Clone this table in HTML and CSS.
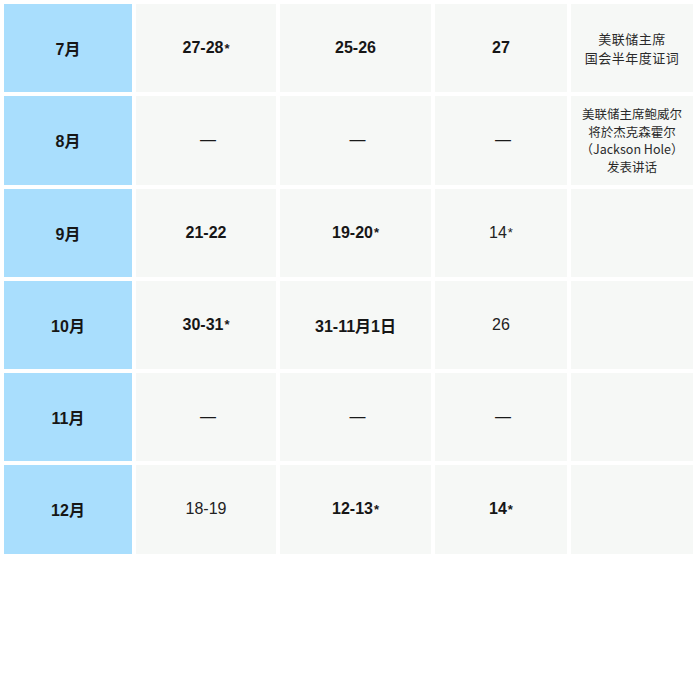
FILE: index.html
```html
<!DOCTYPE html>
<html lang="zh">
<head>
<meta charset="utf-8">
<link rel="stylesheet" href="styles.css">
</head>
<body>
<div class="table">
  <div class="cell month">7月</div>
  <div class="cell bold">27-28<span class="star">*</span></div>
  <div class="cell bold">25-26</div>
  <div class="cell bold">27</div>
  <div class="cell note">美联储主席<br>国会半年度证词</div>

  <div class="cell month">8月</div>
  <div class="cell dash">—</div>
  <div class="cell dash">—</div>
  <div class="cell dash">—</div>
  <div class="cell note tight">美联储主席鲍威尔<br>将於杰克森霍尔<br>（Jackson Hole）<br>发表讲话</div>

  <div class="cell month">9月</div>
  <div class="cell bold">21-22</div>
  <div class="cell bold">19-20<span class="star">*</span></div>
  <div class="cell">14<span class="star">*</span></div>
  <div class="cell note"></div>

  <div class="cell month">10月</div>
  <div class="cell bold">30-31<span class="star">*</span></div>
  <div class="cell bold">31-11月1日</div>
  <div class="cell">26</div>
  <div class="cell note"></div>

  <div class="cell month">11月</div>
  <div class="cell dash">—</div>
  <div class="cell dash">—</div>
  <div class="cell dash">—</div>
  <div class="cell note"></div>

  <div class="cell month">12月</div>
  <div class="cell">18-19</div>
  <div class="cell bold">12-13<span class="star">*</span></div>
  <div class="cell bold">14<span class="star">*</span></div>
  <div class="cell note"></div>
</div>
</body>
</html>
```

FILE: styles.css
```css
html, body {
  margin: 0;
  padding: 0;
  background: #ffffff;
}

body {
  font-family: "Liberation Sans", Arial, "Noto Sans CJK SC", sans-serif;
  color: #1c1c1c;
}

.table {
  display: grid;
  grid-template-columns: 128px 140px 151px 132px 122px;
  grid-auto-rows: 88.25px;
  gap: 4px;
  padding: 4px;
}

.cell {
  background: #f6f8f6;
  display: flex;
  align-items: center;
  justify-content: center;
  text-align: center;
  font-size: 16px;
  color: #222222;
}

.bold {
  font-weight: bold;
  color: #161616;
}

.dash {
  padding-left: 4px;
  color: #1a1a1a;
}

.month {
  background: #a9defd;
  font-weight: bold;
  color: #161616;
}

.star {
  font-size: 13px;
  vertical-align: -0.35em;
  margin-left: 1px;
}

.note {
  font-family: "Noto Sans CJK SC", "Liberation Sans", sans-serif;
  font-size: 13px;
  line-height: 19px;
  color: #2a2a2a;
  letter-spacing: 0.5px;
}

.tight {
  font-size: 12.5px;
  line-height: 17.5px;
  letter-spacing: 0;
}
```
